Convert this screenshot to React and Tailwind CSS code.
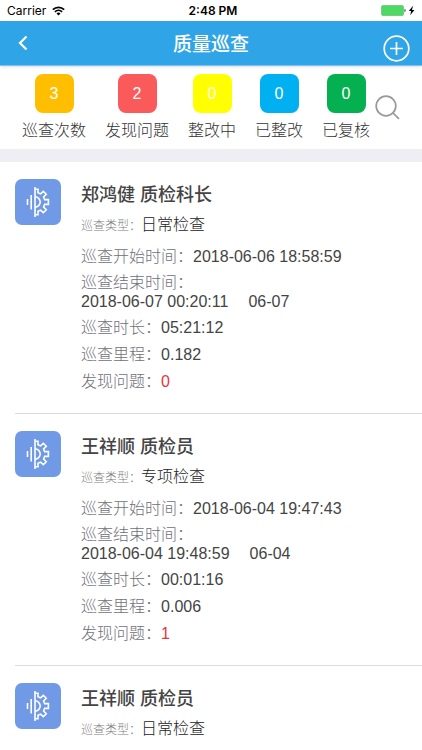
const stats = [
  { label: '巡查次数', value: 3, color: 'bg-[#ffbf00]' },
  { label: '发现问题', value: 2, color: 'bg-[#fa5a5a]' },
  { label: '整改中', value: 0, color: 'bg-[#ffff00]' },
  { label: '已整改', value: 0, color: 'bg-[#00b0f0]' },
  { label: '已复核', value: 0, color: 'bg-[#05b050]' },
]

const records = [
  {
    id: 1,
    name: '郑鸿健 质检科长',
    type: '日常检查',
    start: '2018-06-06 18:58:59',
    end: '2018-06-07 00:20:11',
    day: '06-07',
    duration: '05:21:12',
    mileage: '0.182',
    problems: 0,
  },
  {
    id: 2,
    name: '王祥顺 质检员',
    type: '专项检查',
    start: '2018-06-04 19:47:43',
    end: '2018-06-04 19:48:59',
    day: '06-04',
    duration: '00:01:16',
    mileage: '0.006',
    problems: 1,
  },
  { id: 3, name: '王祥顺 质检员', type: '日常检查' },
]

const StatusBar = () => (
  <div className="grid h-[21px] shrink-0 grid-cols-3 items-center bg-white px-[7px] font-['Inter','Liberation_Sans',sans-serif] text-xs text-black">
    <div className="flex items-center gap-[6px]">
      <span>Carrier</span>
      <svg width="13" height="10" viewBox="0 0 13 10" fill="none" stroke="#000" strokeWidth="1.7">
        <path d="M0.8 3.6a8.2 8.2 0 0 1 11.4 0" />
        <path d="M2.9 5.8a5.2 5.2 0 0 1 7.2 0" />
        <path d="M6.5 9.4 4.5 7.4a2.9 2.9 0 0 1 4 0z" fill="#000" stroke="none" />
      </svg>
    </div>
    <span className="pl-1 text-center font-semibold">2:48 PM</span>
    <svg className="justify-self-end" width="35" height="11" viewBox="0 0 35 11">
      <rect x="1.5" y="0.5" width="22" height="10" rx="1.5" fill="#4cd964" stroke="#7fc98c" />
      <path d="M24.5 3.8c1.6.3 1.6 3.1 0 3.4z" fill="#444" />
      <path d="M33 0.8 28.8 6h2.4l-1 4.2L34.4 5H32z" fill="#000" />
    </svg>
  </div>
)

const Header = () => (
  <header className="z-10 grid h-[45px] shrink-0 grid-cols-3 items-center border-b border-[#7cc4f5] bg-[#2fa4e7] px-3 text-white shadow-sm">
    <button type="button" aria-label="返回" className="justify-self-start p-1">
      <svg width="14" height="16" viewBox="0 0 14 16" fill="none" stroke="currentColor" strokeWidth="2.2">
        <path d="M10.5 1.5 4 8l6.5 6.5" />
      </svg>
    </button>
    <h1 className="pt-[3px] text-center text-[19px] font-medium leading-7">质量巡查</h1>
    <button type="button" aria-label="新增" className="justify-self-end pt-[10px]">
      <svg width="27" height="27" viewBox="0 0 27 27" fill="none" stroke="currentColor" strokeWidth="1.7">
        <circle cx="13.5" cy="13.5" r="12.3" />
        <path d="M13.5 7v13M7 13.5h13" />
      </svg>
    </button>
  </header>
)

const Stats = () => (
  <section className="flex shrink-0 items-start border-b-[13px] border-[#efeef5] pt-2 pb-[6px] pl-[22px]">
    <ul className="flex gap-[19px]">
      {stats.map((s) => (
        <li key={s.label} className="flex flex-col items-center">
          <span className={`flex size-[39px] items-center justify-center rounded-lg text-base text-white ${s.color}`}>
            {s.value}
          </span>
          <span className="mt-[5px] whitespace-nowrap text-base font-light leading-[25px] text-[#333]">{s.label}</span>
        </li>
      ))}
    </ul>
    <button type="button" aria-label="搜索" className="mt-[21px] ml-[5px]">
      <svg width="25" height="25" viewBox="0 0 25 25" fill="none" stroke="#999" strokeWidth="1.7">
        <circle cx="11" cy="11" r="9.8" />
        <path d="m18 18 6 5.8" />
      </svg>
    </button>
  </section>
)

const GearIcon = () => (
  <svg className="size-[46px] shrink-0" viewBox="0 0 46 46" fill="none" stroke="#fff" strokeWidth="1.6">
    <rect width="46" height="46" rx="7" fill="#7099e6" stroke="none" />
    <path d="M20 8v30M16.2 16v14.5M12.5 20v6" />
    <path d="M20 10.2h3v3.6l2.6 1.1 2.7-2.6 3 3-2.7 2.7 1.1 2.6h3.7v4.8h-3.7l-1.1 2.6 2.7 2.7-3 3-2.7-2.6-2.6 1.1v3.6H20" />
    <path d="M20 17.8a5.2 5.2 0 0 1 0 10.4" />
  </svg>
)

const Row = ({ label, children }) => (
  <div className="leading-[27px]">
    <dt className="inline font-light text-[#707078]">{label}：</dt>
    <dd className="inline">{children}</dd>
  </div>
)

const Record = ({ record }) => (
  <li className="ml-[15px] flex gap-5 border-b border-[#dcdcdc] pt-[17px] pb-[18px]">
    <GearIcon />
    <div className="min-w-0 flex-1 pt-[2px] text-base text-[#444]">
      <h2 className="text-lg font-medium leading-7">{record.name}</h2>
      <p className="font-light leading-8 text-[#222]">
        <span className="text-xs text-[#808080]">巡查类型：</span>
        {record.type}
      </p>
      {record.start && (
        <dl className="mt-[2px]">
          <Row label="巡查开始时间">{record.start}</Row>
          <div className="my-[3px] leading-[19px]">
            <dt className="font-light text-[#707078]">巡查结束时间：</dt>
            <dd className="flex gap-5">
              <span>{record.end}</span>
              <span>{record.day}</span>
            </dd>
          </div>
          <Row label="巡查时长">{record.duration}</Row>
          <Row label="巡查里程">{record.mileage}</Row>
          <Row label="发现问题">
            <span className="text-[#e8343c]">{record.problems}</span>
          </Row>
        </dl>
      )}
    </div>
  </li>
)

export default function App() {
  return (
    <div className="flex h-screen flex-col overflow-hidden bg-white font-['Liberation_Sans','Noto_Sans_CJK_SC',sans-serif]">
      <StatusBar />
      <Header />
      <Stats />
      <main className="min-h-0 flex-1 overflow-y-auto [scrollbar-width:none]">
        <ul>
          {records.map((r) => (
            <Record key={r.id} record={r} />
          ))}
        </ul>
      </main>
    </div>
  )
}
